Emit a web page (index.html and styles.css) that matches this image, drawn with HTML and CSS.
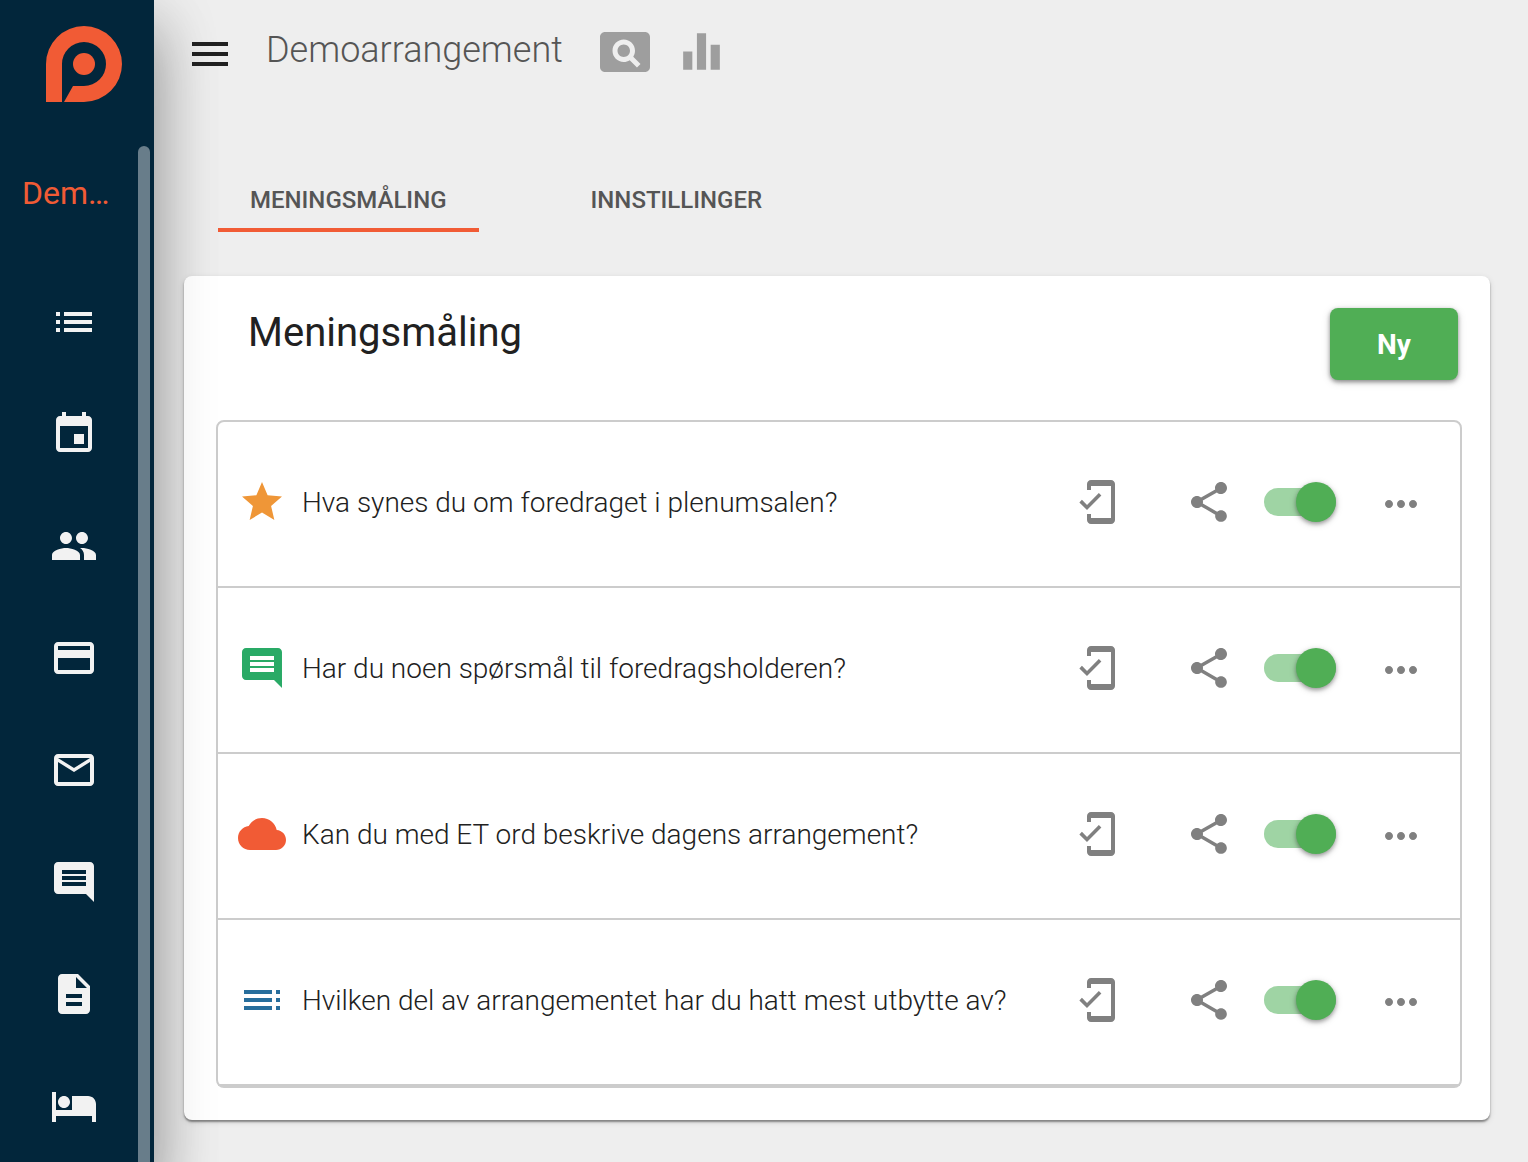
FILE: index.html
```html
<!DOCTYPE html>
<html lang="no">
<head>
<meta charset="utf-8">
<meta name="viewport" content="width=device-width, initial-scale=1">
<title>Meningsmåling – Demoarrangement</title>
<link rel="stylesheet" href="styles.css">
</head>
<body>
<svg class="sprite" aria-hidden="true">
  <symbol id="mobile" viewBox="0 0 24 24"><path d="M19 1H9c-1.1 0-2 .9-2 2v3h2V4h10v16H9v-2H7v3c0 1.1.9 2 2 2h10c1.1 0 2-.9 2-2V3c0-1.1-.9-2-2-2zM7.01 13.47l-2.55-2.55-1.27 1.27L7 16l7.19-7.19-1.27-1.27z"/></symbol>
  <symbol id="share" viewBox="0 0 24 24"><path d="M18 16.08c-.76 0-1.44.3-1.96.77L8.91 12.7c.05-.23.09-.46.09-.7s-.04-.47-.09-.7l7.05-4.11c.54.5 1.25.81 2.04.81 1.66 0 3-1.34 3-3s-1.34-3-3-3-3 1.34-3 3c0 .24.04.47.09.7L8.04 9.81C7.5 9.31 6.79 9 6 9c-1.66 0-3 1.34-3 3s1.34 3 3 3c.79 0 1.5-.31 2.04-.81l7.12 4.16c-.05.21-.08.43-.08.65 0 1.61 1.31 2.92 2.92 2.92 1.61 0 2.92-1.31 2.92-2.92s-1.31-2.92-2.92-2.92z"/></symbol>
  <symbol id="more" viewBox="0 0 24 24"><path d="M6 10c-1.1 0-2 .9-2 2s.9 2 2 2 2-.9 2-2-.9-2-2-2zm12 0c-1.1 0-2 .9-2 2s.9 2 2 2 2-.9 2-2-.9-2-2-2zm-6 0c-1.1 0-2 .9-2 2s.9 2 2 2 2-.9 2-2-.9-2-2-2z"/></symbol>
  <symbol id="comment" viewBox="0 0 24 24"><path d="M21.99 4c0-1.1-.89-2-1.99-2H4c-1.1 0-2 .9-2 2v12c0 1.1.9 2 2 2h14l4 4-.01-18zM18 14H6v-2h12v2zm0-3H6V9h12v2zm0-3H6V6h12v2z"/></symbol>
</svg>

<div class="app">
  <aside class="sidebar">
    <div class="sidebar-panel">
      <a class="logo" href="#" aria-label="Hjem">
        <svg viewBox="0 0 76 76"><path d="M38 0a38 38 0 0 1 0 76H18l9-16h11a22 22 0 1 0-22-22v38H0V38A38 38 0 0 1 38 0z"/><circle cx="38" cy="38" r="11"/></svg>
      </a>
      <div class="scroll-area">
        <a class="event-name" href="#">Dem…</a>
        <nav class="nav" aria-label="Hovedmeny">
          <a href="#" aria-label="Oversikt"><svg class="icon" viewBox="0 0 24 24"><path d="M3 13h2v-2H3v2zm0 4h2v-2H3v2zm0-8h2V7H3v2zm4 4h14v-2H7v2zm0 4h14v-2H7v2zM7 7v2h14V7H7z"/></svg></a>
          <a href="#" aria-label="Program"><svg class="icon" viewBox="0 0 24 24"><path d="M17 12h-5v5h5v-5zM16 1v2H8V1H6v2H5c-1.11 0-1.99.9-1.99 2L3 19c0 1.1.89 2 2 2h14c1.1 0 2-.9 2-2V5c0-1.1-.9-2-2-2h-1V1h-2zm3 18H5V8h14v11z"/></svg></a>
          <a href="#" aria-label="Deltakere"><svg class="icon" viewBox="0 0 24 24"><path d="M16 11c1.66 0 2.99-1.34 2.99-3S17.66 5 16 5c-1.66 0-3 1.34-3 3s1.34 3 3 3zm-8 0c1.66 0 2.99-1.34 2.99-3S9.66 5 8 5C6.34 5 5 6.34 5 8s1.34 3 3 3zm0 2c-2.33 0-7 1.17-7 3.5V19h14v-2.5c0-2.33-4.67-3.5-7-3.5zm8 0c-.29 0-.62.02-.97.05 1.16.84 1.97 1.97 1.97 3.45V19h6v-2.5c0-2.33-4.67-3.5-7-3.5z"/></svg></a>
          <a href="#" aria-label="Betaling"><svg class="icon" viewBox="0 0 24 24"><path d="M20 4H4c-1.11 0-1.99.89-1.99 2L2 18c0 1.11.89 2 2 2h16c1.11 0 2-.89 2-2V6c0-1.11-.89-2-2-2zm0 14H4v-6h16v6zm0-10H4V6h16v2z"/></svg></a>
          <a href="#" aria-label="E-post"><svg class="icon" viewBox="0 0 24 24"><path d="M20 4H4c-1.1 0-1.99.9-1.99 2L2 18c0 1.1.9 2 2 2h16c1.1 0 2-.9 2-2V6c0-1.1-.9-2-2-2zm0 14H4V8l8 5 8-5v10zm-8-7L4 6h16l-8 5z"/></svg></a>
          <a href="#" aria-label="Meldinger"><svg class="icon"><use href="#comment"/></svg></a>
          <a href="#" aria-label="Dokumenter"><svg class="icon" viewBox="0 0 24 24"><path d="M14 2H6c-1.1 0-1.99.9-1.99 2L4 20c0 1.1.89 2 1.99 2H18c1.1 0 2-.9 2-2V8l-6-6zm2 16H8v-2h8v2zm0-4H8v-2h8v2zm-3-5V3.5L18.5 9H13z"/></svg></a>
          <a href="#" aria-label="Hotell"><svg class="icon" viewBox="0 0 24 24"><path d="M7 13c1.66 0 3-1.34 3-3S8.66 7 7 7s-3 1.34-3 3 1.34 3 3 3zm12-6h-8v7H3V5H1v15h2v-3h18v3h2v-9c0-2.21-1.79-4-4-4z"/></svg></a>
        </nav>
        <span class="scroll-thumb"></span>
      </div>
    </div>
  </aside>

  <main class="main">
    <header class="topbar">
      <button class="icon-button menu" type="button" aria-label="Meny"><svg class="icon" viewBox="0 0 24 24"><path d="M3 18h18v-2H3v2zm0-5h18v-2H3v2zm0-7v2h18V6H3z"/></svg></button>
      <h1 class="page-title">Demoarrangement</h1>
      <button class="icon-button preview" type="button" aria-label="Forhåndsvis"><svg class="icon" viewBox="0 0 24 24"><path d="M11.5 9C10.12 9 9 10.12 9 11.5s1.12 2.5 2.5 2.5 2.5-1.12 2.5-2.5S12.88 9 11.5 9zM20 4H4c-1.1 0-2 .9-2 2v12c0 1.1.9 2 2 2h16c1.1 0 2-.9 2-2V6c0-1.1-.9-2-2-2zm-3.21 14.21l-2.91-2.91c-.69.44-1.51.7-2.39.7C9.01 16 7 13.99 7 11.5S9.01 7 11.5 7 16 9.01 16 11.5c0 .88-.26 1.69-.7 2.39l2.91 2.9-1.42 1.42z"/></svg></button>
      <button class="icon-button stats" type="button" aria-label="Statistikk"><svg class="icon" viewBox="0 0 24 24"><path d="M10 20h4V4h-4v16zm-6 0h4v-8H4v8zM16 9v11h4V9h-4z"/></svg></button>
    </header>

    <nav class="tabs" aria-label="Faner">
      <a class="tab active" href="#" aria-current="page">MENINGSMÅLING</a>
      <a class="tab" href="#">INNSTILLINGER</a>
    </nav>

    <section class="card">
      <div class="card-head">
        <h2 class="card-title">Meningsmåling</h2>
        <button class="new-button" type="button">Ny</button>
      </div>
      <ul class="polls">
        <li class="poll">
          <svg class="icon star" viewBox="0 0 24 24"><path d="M12 17.27L18.18 21l-1.64-7.03L22 9.24l-7.19-.61L12 2 9.19 8.63 2 9.24l5.46 4.73L5.82 21z"/></svg>
          <label class="question" for="poll-1">Hva synes du om foredraget i plenumsalen?</label>
          <button class="icon-button mobile" type="button" aria-label="Vis på mobil"><svg class="icon"><use href="#mobile"/></svg></button>
          <button class="icon-button share" type="button" aria-label="Del"><svg class="icon"><use href="#share"/></svg></button>
          <input class="switch" id="poll-1" type="checkbox" role="switch" checked>
          <button class="icon-button more" type="button" aria-label="Mer"><svg class="icon"><use href="#more"/></svg></button>
        </li>
        <li class="poll">
          <svg class="icon green" viewBox="0 0 24 24"><use href="#comment"/></svg>
          <label class="question" for="poll-2">Har du noen spørsmål til foredragsholderen?</label>
          <button class="icon-button mobile" type="button" aria-label="Vis på mobil"><svg class="icon"><use href="#mobile"/></svg></button>
          <button class="icon-button share" type="button" aria-label="Del"><svg class="icon"><use href="#share"/></svg></button>
          <input class="switch" id="poll-2" type="checkbox" role="switch" checked>
          <button class="icon-button more" type="button" aria-label="Mer"><svg class="icon"><use href="#more"/></svg></button>
        </li>
        <li class="poll">
          <svg class="icon cloud" viewBox="0 0 24 24"><path d="M19.35 10.04C18.67 6.59 15.64 4 12 4 9.11 4 6.6 5.64 5.35 8.04 2.34 8.36 0 10.91 0 14c0 3.31 2.69 6 6 6h13c2.76 0 5-2.24 5-5 0-2.64-2.05-4.78-4.65-4.96z"/></svg>
          <label class="question" for="poll-3">Kan du med ET ord beskrive dagens arrangement?</label>
          <button class="icon-button mobile" type="button" aria-label="Vis på mobil"><svg class="icon"><use href="#mobile"/></svg></button>
          <button class="icon-button share" type="button" aria-label="Del"><svg class="icon"><use href="#share"/></svg></button>
          <input class="switch" id="poll-3" type="checkbox" role="switch" checked>
          <button class="icon-button more" type="button" aria-label="Mer"><svg class="icon"><use href="#more"/></svg></button>
        </li>
        <li class="poll">
          <svg class="icon blue" viewBox="0 0 24 24"><path d="M3 9h14V7H3v2zm0 4h14v-2H3v2zm0 4h14v-2H3v2zm16 0h2v-2h-2v2zm0-10v2h2V7h-2zm0 6h2v-2h-2v2z"/></svg>
          <label class="question" for="poll-4">Hvilken del av arrangementet har du hatt mest utbytte av?</label>
          <button class="icon-button mobile" type="button" aria-label="Vis på mobil"><svg class="icon"><use href="#mobile"/></svg></button>
          <button class="icon-button share" type="button" aria-label="Del"><svg class="icon"><use href="#share"/></svg></button>
          <input class="switch" id="poll-4" type="checkbox" role="switch" checked>
          <button class="icon-button more" type="button" aria-label="Mer"><svg class="icon"><use href="#more"/></svg></button>
        </li>
      </ul>
    </section>
  </main>
</div>
</body>
</html>
```

FILE: styles.css
```css
* {
  box-sizing: border-box;
}

body {
  margin: 0;
  background: #eee;
  color: #212121;
  font-family: Roboto, "Liberation Sans", sans-serif;
}

a {
  color: inherit;
  text-decoration: none;
}

.sprite {
  display: none;
}

.icon {
  display: block;
  flex: none;
  width: 48px;
  height: 48px;
  fill: currentColor;
}

.icon-button {
  flex: none;
  padding: 0;
  border: 0;
  background: none;
  color: #808080;
  cursor: pointer;
}

.app {
  display: grid;
  grid-template-columns: 154px minmax(0, 1fr);
  min-height: 100vh;
}

/* Sidebar: the outer shadow falls behind the card, the panel's own in front */
.sidebar {
  box-shadow: 0 40px 60px 2px rgba(0, 0, 0, 0.28);
}

.sidebar-panel {
  position: sticky;
  top: 0;
  z-index: 3;
  display: flex;
  flex-direction: column;
  height: 100vh;
  padding-top: 26px;
  background: #02263b;
  box-shadow: 0 20px 60px 10px rgba(0, 0, 0, 0.14);
}

.logo {
  align-self: center;
  width: 76px;
  margin: 0 0 44px 14px;
  color: #f15b35;
}

.logo svg {
  display: block;
  fill: currentColor;
}

.scroll-area {
  position: relative;
  flex: 1;
  min-height: 0;
  overflow: hidden;
  padding: 24px 6px 0 0;
}

.event-name {
  display: block;
  padding-left: 22px;
  color: #f15b35;
  font-size: 32px;
  line-height: 46px;
}

.nav {
  display: flex;
  flex-direction: column;
  align-items: center;
  gap: 64px;
  padding-top: 82px;
  color: #f2f2f2;
}

.scroll-thumb {
  position: absolute;
  top: 0;
  right: 4px;
  bottom: -12px;
  width: 12px;
  border-radius: 6px;
  background: #687d8a;
}

/* Top bar */
.main {
  padding: 22px 38px 42px 30px;
}

.topbar {
  display: flex;
  align-items: center;
  height: 60px;
}

.menu {
  margin: 4px 32px 0 2px;
  color: #212121;
}

.page-title {
  margin: 0 32px 4px 0;
  color: #555;
  font-size: 36px;
  font-weight: 300;
  line-height: 44px;
}

.preview,
.stats {
  color: #9e9e9e;
}

.preview .icon {
  width: 60px;
  height: 60px;
}

.stats {
  margin: 0 0 2px 19px;
}

.stats .icon {
  width: 55px;
  height: 55px;
}

/* Tabs */
.tabs {
  display: flex;
  gap: 80px;
  padding: 86px 34px 0;
}

.tab {
  padding: 16px 32px 12px;
  border-bottom: 4px solid transparent;
  color: #555;
  font-size: 24px;
  font-weight: 500;
  line-height: 32px;
}

.tab.active {
  border-color: #f15b35;
}

/* Card */
.card {
  position: relative;
  z-index: 2;
  margin-top: 44px;
  padding: 32px 28px 32px 32px;
  border-radius: 8px;
  background: #fff;
  box-shadow: 0 2px 2px rgba(0, 0, 0, 0.4), 0 2px 6px rgba(0, 0, 0, 0.12);
}

.card-head {
  display: flex;
  align-items: flex-start;
  justify-content: space-between;
  padding: 0 4px 40px 32px;
}

.card-title {
  margin: 0;
  font-size: 40px;
  font-weight: 400;
  line-height: 50px;
}

.new-button {
  width: 128px;
  height: 72px;
  padding: 0;
  border: 0;
  border-radius: 8px;
  background: #50ae55;
  box-shadow: 0 2px 4px rgba(0, 0, 0, 0.4), 0 2px 10px rgba(0, 0, 0, 0.14);
  color: #fff;
  font-family: inherit;
  font-size: 28px;
  font-weight: 700;
  cursor: pointer;
}

/* Poll list */
.polls {
  margin: 0;
  padding: 0;
  border: 2px solid #ccc;
  border-radius: 8px;
  list-style: none;
}

.poll {
  display: flex;
  align-items: center;
  height: 166px;
  padding: 0 35px 4px 20px;
  border-bottom: 2px solid #ccc;
}

.question {
  flex: 1;
  min-width: 0;
  padding: 2px 0 0 16px;
  font-size: 28px;
  font-weight: 300;
  line-height: 40px;
}

.star { color: #ef9637; }
.green { color: #29aa66; }
.cloud { color: #f15b35; }
.blue { color: #276e9c; }

.share {
  margin: 0 31px 0 64px;
}

.switch {
  position: relative;
  flex: none;
  width: 72px;
  height: 28px;
  margin: 0;
  border-radius: 14px;
  background: #bdbdbd;
  appearance: none;
  cursor: pointer;
}

.switch::before {
  content: "";
  position: absolute;
  top: -6px;
  left: 0;
  width: 40px;
  height: 40px;
  border-radius: 50%;
  background: #fafafa;
  box-shadow: 0 2px 4px rgba(0, 0, 0, 0.35), 0 2px 8px rgba(0, 0, 0, 0.12);
}

.switch:checked {
  background: #9fd4a4;
}

.switch:checked::before {
  left: 32px;
  background: #50ae55;
}

.more {
  margin: 4px 0 0 41px;
}
```
